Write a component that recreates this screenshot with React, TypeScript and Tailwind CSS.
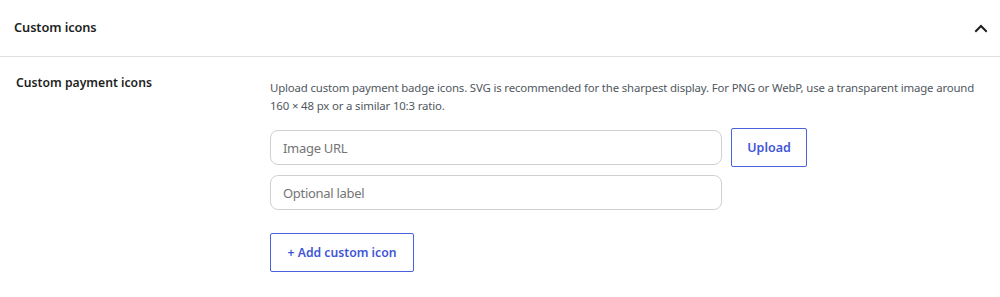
import React from 'react';

const App = () => {
  return (
    <div className="w-[1000px] h-[297px] bg-white font-['Noto_Sans',sans-serif] text-[#1e1e1e]">
      <div className="flex items-center justify-between h-[57px] pl-[14px] pr-[12px] border-b border-[#e0e0e0]">
        <h2 className="text-[12.8px] font-semibold tracking-[-0.1px]">Custom icons</h2>
        <svg width="14" height="14" viewBox="0 0 14 14" fill="none" stroke="#1e1e1e" strokeWidth="2" strokeLinecap="square">
          <path d="M2 10l5-5 5 5" />
        </svg>
      </div>

      <div className="flex pt-[17px]">
        <div className="w-[270px] pl-[16px] text-[12.2px] font-semibold leading-[18px]">Custom payment icons</div>
        <div className="flex-1 pr-[15px]">
          <p className="text-[11.4px] leading-[18px] tracking-[-0.15px] text-[#50575e] pt-[5px]">
            Upload custom payment badge icons. SVG is recommended for the sharpest display. For PNG or WebP, use a transparent image around 160 × 48 px or a similar 10:3 ratio.
          </p>
          <div className="mt-[13px] flex gap-[9px] items-center">
            <input
              className="w-[452px] h-[35px] rounded-[8px] border border-[#d0d0d0] px-[12px] text-[13px] tracking-[-0.3px] placeholder:text-[#757575] outline-none"
              placeholder="Image URL"
            />
            <button className="w-[76px] h-[39px] pt-[2px] border border-[#4961dc] rounded-[2px] text-[#3f56d6] text-[12.5px] font-semibold">
              Upload
            </button>
          </div>
          <input
            className="mt-[8px] w-[452px] h-[35px] rounded-[8px] border border-[#d0d0d0] px-[12px] text-[13px] tracking-[-0.3px] placeholder:text-[#757575] outline-none block"
            placeholder="Optional label"
          />
          <button className="mt-[23px] w-[144px] h-[39px] pt-[2px] border border-[#4961dc] rounded-[2px] text-[#3f56d6] text-[12.2px] font-semibold">
            + Add custom icon
          </button>
        </div>
      </div>
    </div>
  );
};

export default App;
